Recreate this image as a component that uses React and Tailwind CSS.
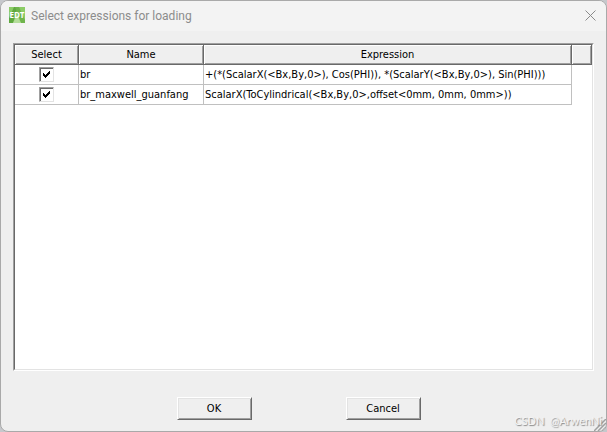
import React, { useState } from 'react';

const initialRows = [
  {
    id: 'br',
    name: 'br',
    expression: '+(*(ScalarX(<Bx,By,0>), Cos(PHI)), *(ScalarY(<Bx,By,0>), Sin(PHI)))',
    checked: true,
  },
  {
    id: 'br_maxwell_guanfang',
    name: 'br_maxwell_guanfang',
    expression: 'ScalarX(ToCylindrical(<Bx,By,0>,offset<0mm, 0mm, 0mm>))',
    checked: true,
  },
];

function AppIcon() {
  return (
    <svg className="w-4 h-4 shrink-0" viewBox="0 0 16 16" aria-hidden="true">
      <rect width="16" height="16" fill="#8ccc66" />
      <path d="M0 16V11L5 0h4L4 16z" fill="#5fa840" />
      <path d="M6 0h4l6 13v3h-4z" fill="#6fb44c" />
      <path d="M4 16 8 8l4 8z" fill="#b4dd9b" />
      <text
        x="8"
        y="11"
        textAnchor="middle"
        fontFamily="Open Sans, sans-serif"
        fontWeight="700"
        fontSize="8"
        fill="#fff"
      >
        EDT
      </text>
    </svg>
  );
}

function TitleBar({ title }) {
  return (
    <header className="flex items-center h-[30px] px-2 pb-0.5 bg-[#f3f3f3]">
      <AppIcon />
      <h1 className="ml-1.5 pt-0.5 flex-1 font-['Roboto',sans-serif] text-[12px] leading-4 text-[#8c8c8c]">{title}</h1>
      <button type="button" aria-label="Close" className="flex items-center justify-center w-4 h-4">
        <svg className="w-[11px] h-[11px]" viewBox="0 0 11 11" fill="none" stroke="#8a8a8a" strokeWidth="1">
          <path d="M.5.5l10 10M10.5.5l-10 10" />
        </svg>
      </button>
    </header>
  );
}

function HeaderCell({ children }) {
  return (
    <th
      scope="col"
      className="h-5 p-0 font-normal text-center border-r border-b border-[#696969] bg-[#efefef] shadow-[inset_1px_1px_#fff,inset_-1px_-1px_#a0a0a0]"
    >
      {children}
    </th>
  );
}

function CheckBox({ checked, onChange, label }) {
  return (
    <label className="grid w-[15px] h-[15px] mx-auto">
      <input
        type="checkbox"
        checked={checked}
        onChange={onChange}
        aria-label={label}
        className="appearance-none col-start-1 row-start-1 w-[15px] h-[15px] bg-white border border-t-[#a0a0a0] border-l-[#a0a0a0] border-r-[#e3e3e3] border-b-[#e3e3e3] shadow-[inset_1px_1px_#696969]"
      />
      {checked && (
        <svg
          className="col-start-1 row-start-1 w-[15px] h-[15px] pointer-events-none"
          viewBox="0 0 15 15"
          shapeRendering="crispEdges"
        >
          <path d="M4 6h1v1h1v1h1v-1h1v-1h1v-1h1v-1h1v3h-1v1h-1v1h-1v1h-1v1h-1v-1h-1v-1h-1z" fill="#000" />
        </svg>
      )}
    </label>
  );
}

function PushButton({ children }) {
  return (
    <button
      type="button"
      className="w-[75px] h-[23px] text-center bg-[#efefef] border border-t-white border-l-white border-r-[#696969] border-b-[#696969] shadow-[inset_1px_1px_#e3e3e3,inset_-1px_-1px_#a0a0a0]"
    >
      {children}
    </button>
  );
}

function App() {
  const [rows, setRows] = useState(initialRows);

  const toggleRow = (id) => {
    setRows(rows.map((row) => (row.id === id ? { ...row, checked: !row.checked } : row)));
  };

  return (
    <div className="min-h-screen flex bg-[#c6c8cc]">
      <main className="relative flex-1 flex flex-col overflow-hidden rounded-lg border border-[#a9a9a9] bg-[#efefef] font-['DejaVu_Sans_Condensed','Noto_Sans',sans-serif] text-[11px] leading-[14px] text-black">
        <TitleBar title="Select expressions for loading" />

        <section className="flex-1 mt-3 mx-3 border border-t-[#a0a0a0] border-l-[#a0a0a0] border-r-white border-b-white">
          <div className="h-full bg-white border border-t-[#696969] border-l-[#696969] border-r-[#e3e3e3] border-b-[#e3e3e3]">
            <table className="w-full table-fixed border-separate border-spacing-0">
              <colgroup>
                <col className="w-16" />
                <col className="w-[125px]" />
                <col />
                <col className="w-5" />
              </colgroup>
              <thead>
                <tr>
                  <HeaderCell>Select</HeaderCell>
                  <HeaderCell>Name</HeaderCell>
                  <HeaderCell>Expression</HeaderCell>
                  <HeaderCell />
                </tr>
              </thead>
              <tbody>
                {rows.map((row) => (
                  <tr key={row.id}>
                    <td className="h-5 p-0 border-r border-b border-[#c0c0c0]">
                      <CheckBox
                        checked={row.checked}
                        onChange={() => toggleRow(row.id)}
                        label={`Load ${row.name}`}
                      />
                    </td>
                    <td className="h-5 p-0 pl-px border-r border-b border-[#c0c0c0] whitespace-nowrap">{row.name}</td>
                    <td className="h-5 p-0 pl-px border-r border-b border-[#c0c0c0] whitespace-nowrap">
                      {row.expression}
                    </td>
                    <td className="p-0" />
                  </tr>
                ))}
              </tbody>
            </table>
          </div>
        </section>

        <footer className="flex justify-center gap-[94px] pt-[26px] pb-[11px] pr-2.5">
          <PushButton>OK</PushButton>
          <PushButton>Cancel</PushButton>
        </footer>

        <svg
          className="absolute right-0 bottom-0 w-3 h-3"
          viewBox="0 0 12 12"
          fill="none"
          stroke="#a0a0a0"
          strokeWidth="1.5"
          aria-hidden="true"
        >
          <path d="M0 12 12 0M4 12l8-8M8 12l4-4" />
        </svg>
        <span className="absolute right-1 bottom-0.5 font-['Lato',sans-serif] text-[11px] leading-4 whitespace-pre text-[#f4f4f4] [text-shadow:1px_1px_1px_#888]">
          CSDN  @ArwenNi
        </span>
      </main>
    </div>
  );
}

export default App;
